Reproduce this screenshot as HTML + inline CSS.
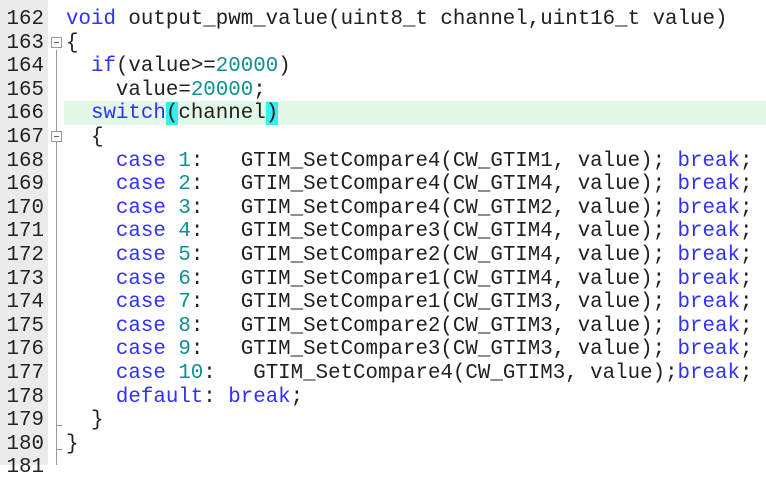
<!DOCTYPE html>
<html><head><meta charset="utf-8"><style>
html,body{margin:0;padding:0;width:766px;height:465px;overflow:hidden;background:#fff;}
.g{position:absolute;left:0;top:0;width:48px;height:465px;background:#ebebeb;}
.f{position:absolute;left:48px;top:0;width:16px;height:465px;background:#fff;}
.vl{position:absolute;left:56px;top:50px;width:1px;height:415px;background:#999;}
.box{position:absolute;left:51px;width:11px;height:11px;border:1px solid #999;background:#fff;box-sizing:border-box;}
.box:after{content:"";position:absolute;left:2px;top:4px;width:5px;height:1px;background:#666;}
.tk{position:absolute;left:56px;width:6px;height:1px;background:#999;}
.ln{position:absolute;left:0;width:44px;text-align:right;font:20.8px "Liberation Mono",monospace;color:#222;line-height:23.6px;height:23.6px;}
.c{position:absolute;left:66px;white-space:pre;font:20.8px "Liberation Mono",monospace;color:#202020;line-height:23.6px;height:23.6px;}
.hl{position:absolute;left:64px;width:702px;height:23.6px;background:#e3f9e8;}
.k{color:#3030ff}.n{color:#109090}.b{background:#33f0f0}
</style></head><body>
<div class="g"></div><div class="f"></div>
<div class="hl" style="top:101.4px"></div>
<div class="vl"></div>
<div class="box" style="top:37px"></div>
<div class="box" style="top:131px"></div>
<div class="tk" style="top:425px"></div>
<div class="tk" style="top:449px"></div>
<div class="ln" style="top:-15.6px">161</div>
<div class="ln" style="top:8px">162</div>
<div class="ln" style="top:31.6px">163</div>
<div class="ln" style="top:55.2px">164</div>
<div class="ln" style="top:78.8px">165</div>
<div class="ln" style="top:102.4px">166</div>
<div class="ln" style="top:126px">167</div>
<div class="ln" style="top:149.6px">168</div>
<div class="ln" style="top:173.2px">169</div>
<div class="ln" style="top:196.8px">170</div>
<div class="ln" style="top:220.4px">171</div>
<div class="ln" style="top:244px">172</div>
<div class="ln" style="top:267.6px">173</div>
<div class="ln" style="top:291.2px">174</div>
<div class="ln" style="top:314.8px">175</div>
<div class="ln" style="top:338.4px">176</div>
<div class="ln" style="top:362px">177</div>
<div class="ln" style="top:385.6px">178</div>
<div class="ln" style="top:409.2px">179</div>
<div class="ln" style="top:432.8px">180</div>
<div class="ln" style="top:456.4px">181</div>
<div class="c" style="top:8px"><span class="k">void</span> output_pwm_value(uint8_t channel,uint16_t value)</div>
<div class="c" style="top:31.6px">{</div>
<div class="c" style="top:55.2px">  <span class="k">if</span>(value&gt;=<span class="n">20000</span>)</div>
<div class="c" style="top:78.8px">    value=<span class="n">20000</span>;</div>
<div class="c" style="top:102.4px">  <span class="k">switch</span><span class="b">(</span>channel<span class="b">)</span></div>
<div class="c" style="top:126px">  {</div>
<div class="c" style="top:149.6px">    <span class="k">case</span> <span class="n">1</span>:   GTIM_SetCompare4(CW_GTIM1, value); <span class="k">break</span>;</div>
<div class="c" style="top:173.2px">    <span class="k">case</span> <span class="n">2</span>:   GTIM_SetCompare4(CW_GTIM4, value); <span class="k">break</span>;</div>
<div class="c" style="top:196.8px">    <span class="k">case</span> <span class="n">3</span>:   GTIM_SetCompare4(CW_GTIM2, value); <span class="k">break</span>;</div>
<div class="c" style="top:220.4px">    <span class="k">case</span> <span class="n">4</span>:   GTIM_SetCompare3(CW_GTIM4, value); <span class="k">break</span>;</div>
<div class="c" style="top:244px">    <span class="k">case</span> <span class="n">5</span>:   GTIM_SetCompare2(CW_GTIM4, value); <span class="k">break</span>;</div>
<div class="c" style="top:267.6px">    <span class="k">case</span> <span class="n">6</span>:   GTIM_SetCompare1(CW_GTIM4, value); <span class="k">break</span>;</div>
<div class="c" style="top:291.2px">    <span class="k">case</span> <span class="n">7</span>:   GTIM_SetCompare1(CW_GTIM3, value); <span class="k">break</span>;</div>
<div class="c" style="top:314.8px">    <span class="k">case</span> <span class="n">8</span>:   GTIM_SetCompare2(CW_GTIM3, value); <span class="k">break</span>;</div>
<div class="c" style="top:338.4px">    <span class="k">case</span> <span class="n">9</span>:   GTIM_SetCompare3(CW_GTIM3, value); <span class="k">break</span>;</div>
<div class="c" style="top:362px">    <span class="k">case</span> <span class="n">10</span>:   GTIM_SetCompare4(CW_GTIM3, value);<span class="k">break</span>;</div>
<div class="c" style="top:385.6px">    <span class="k">default</span>: <span class="k">break</span>;</div>
<div class="c" style="top:409.2px">  }</div>
<div class="c" style="top:432.8px">}</div>
</body></html>
